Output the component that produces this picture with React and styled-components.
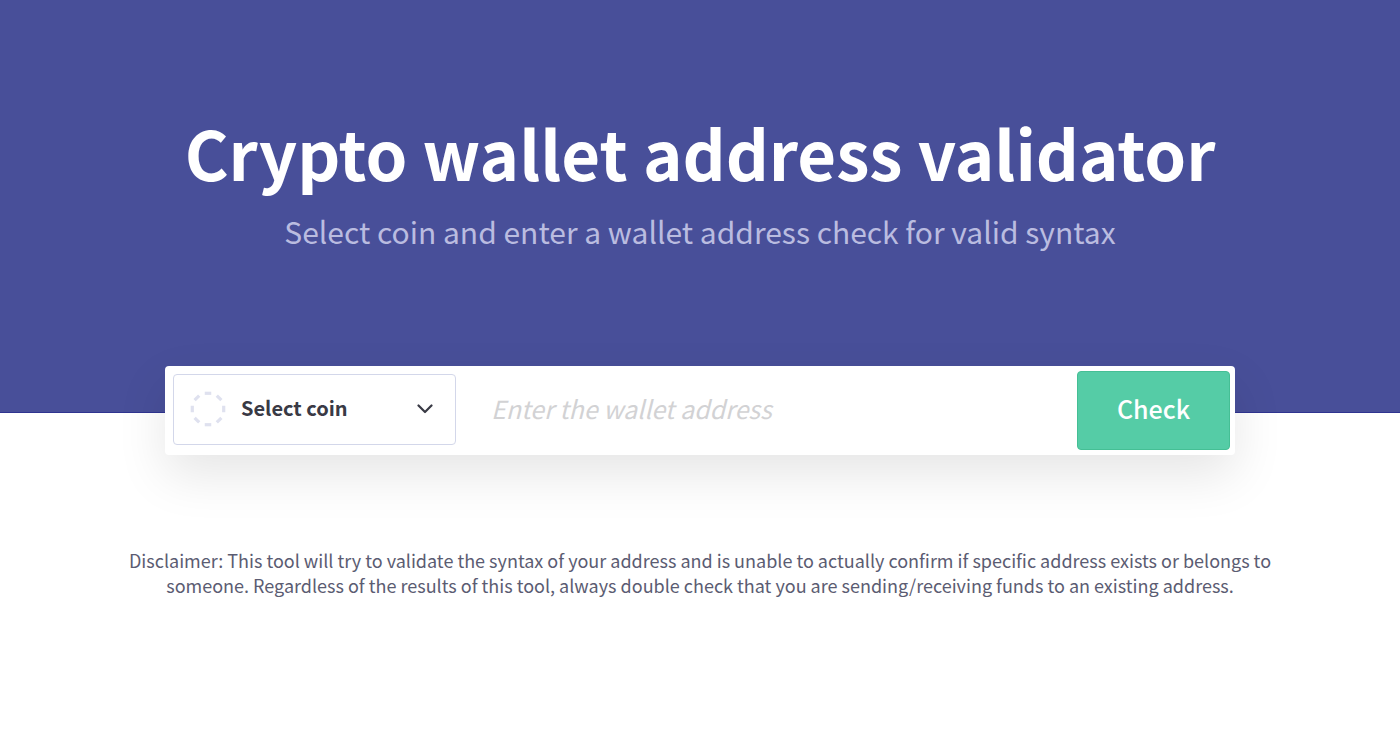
import { useState } from "react";
import styled, { createGlobalStyle } from "styled-components";

const coins = ["Bitcoin", "Ethereum", "Litecoin", "Ripple", "Dash"];

export default function App() {
  const [coin, setCoin] = useState("");
  const [address, setAddress] = useState("");

  const handleSubmit = (e) => {
    e.preventDefault();
  };

  return (
    <>
      <GlobalStyle />
      <Hero>
        <Title>Crypto wallet address validator</Title>
        <Subtitle>
          Select coin and enter a wallet address check for valid syntax
        </Subtitle>
      </Hero>

      <Main>
        <SearchForm onSubmit={handleSubmit}>
          <CoinField>
            <CoinSelect
              aria-label="Coin"
              value={coin}
              onChange={(e) => setCoin(e.target.value)}
            >
              <option value="">Select coin</option>
              {coins.map((name) => (
                <option key={name} value={name}>
                  {name}
                </option>
              ))}
            </CoinSelect>
            <CoinIcon viewBox="0 0 36 36" aria-hidden="true">
              {[0, 45, 90, 135, 180, 225, 270, 315].map((angle) => (
                <rect
                  key={angle}
                  x="14.75"
                  y="0.7"
                  width="6.5"
                  height="3.2"
                  transform={`rotate(${angle} 18 18)`}
                />
              ))}
            </CoinIcon>
            <Chevron viewBox="0 0 16 10" aria-hidden="true">
              <path d="M1.5 1.5 8 8l6.5-6.5" />
            </Chevron>
          </CoinField>
          <AddressInput
            type="text"
            aria-label="Wallet address"
            placeholder="Enter the wallet address"
            value={address}
            onChange={(e) => setAddress(e.target.value)}
          />
          <CheckButton type="submit">Check</CheckButton>
        </SearchForm>

        <Disclaimer>
          Disclaimer: This tool will try to validate the syntax of your address
          and is unable to actually confirm if specific address exists or
          belongs to someone. Regardless of the results of this tool, always
          double check that you are sending/receiving funds to an existing
          address.
        </Disclaimer>
      </Main>
    </>
  );
}

const GlobalStyle = createGlobalStyle`
  * {
    box-sizing: border-box;
  }
  body {
    margin: 0;
    background: #fff;
  }
  body, input, select, button {
    font-family: "Noto Sans CJK JP", "Noto Sans", sans-serif;
  }
`;

const Hero = styled.header`
  padding: 106px 24px 161px;
  background: #484f99;
  border-bottom: 1px solid #2f3490;
  text-align: center;
`;

const Title = styled.h1`
  margin: 0;
  color: #fff;
  font-size: 67px;
  line-height: 92px;
  font-weight: 700;
`;

const Subtitle = styled.p`
  margin: 13px 0 0;
  color: #babce0;
  font-size: 30px;
  line-height: 40px;
`;

const Main = styled.main`
  padding: 0 100px;
`;

const SearchForm = styled.form`
  display: flex;
  max-width: 1070px;
  margin: -47px auto 0;
  padding: 5px;
  border-radius: 4px;
  background: #fff;
  box-shadow: 0 20px 50px rgba(0, 0, 0, 0.1);
`;

const CoinField = styled.div`
  position: relative;
  width: 283px;
  height: 71px;
  margin: 3px;
`;

const CoinSelect = styled.select`
  width: 100%;
  height: 100%;
  padding: 0 48px 4px 67px;
  border: 1px solid #d3d7ea;
  border-radius: 4px;
  background: #fff;
  color: #393a45;
  font-size: 20px;
  font-weight: 700;
  appearance: none;
`;

const CoinIcon = styled.svg`
  position: absolute;
  top: 17px;
  left: 17px;
  width: 36px;
  height: 36px;
  fill: #dfe1ef;
  pointer-events: none;
`;

const Chevron = styled.svg`
  position: absolute;
  top: 30px;
  right: 23px;
  width: 16px;
  height: 10px;
  fill: none;
  stroke: #393a45;
  stroke-width: 2.2;
  stroke-linecap: round;
  stroke-linejoin: round;
  pointer-events: none;
`;

const AddressInput = styled.input`
  flex: 1;
  min-width: 0;
  padding: 0 32px 6px;
  border: 0;
  background: none;
  color: #393a45;
  font-size: 25px;

  &::placeholder {
    color: #d2d2d4;
    font-style: italic;
    opacity: 1;
  }
`;

const CheckButton = styled.button`
  width: 153px;
  height: 79px;
  padding: 0 0 6px;
  border: 1px solid #45bf95;
  border-radius: 4px;
  background: #55cca6;
  color: #fff;
  font-size: 25px;
  font-weight: 500;
  cursor: pointer;
`;

const Disclaimer = styled.p`
  margin: 93px auto 0;
  max-width: 1180px;
  color: #5b5c72;
  font-size: 18px;
  line-height: 25px;
  text-align: center;
`;
